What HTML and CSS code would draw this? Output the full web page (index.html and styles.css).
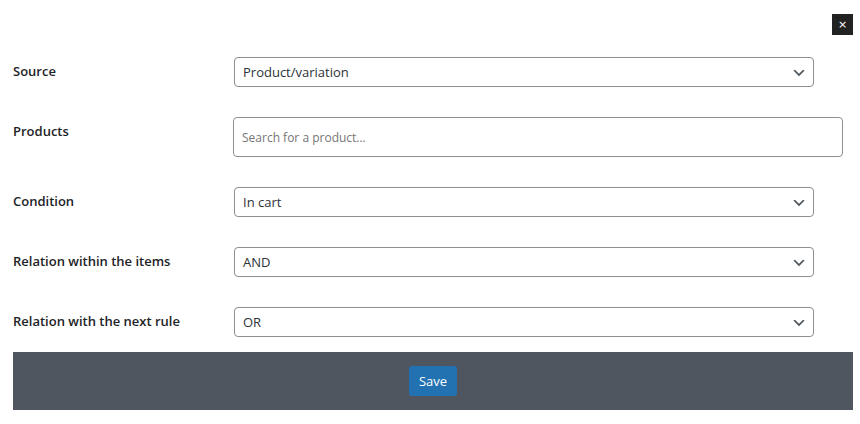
FILE: index.html
```html
<!DOCTYPE html>
<html>
<head>
<meta charset="utf-8">
<link rel="stylesheet" href="styles.css">
</head>
<body>
<div class="modal">
  <div class="topbar">
    <button class="close" type="button">×</button>
  </div>
  <div class="form">
    <div class="row">
      <div class="label">Source</div>
      <div class="field">
        <div class="select"><span>Product/variation</span>
          <svg width="16" height="16" viewBox="0 0 20 20"><path d="M5 6l5 5 5-5 2 1-7 7-7-7 2-1z" fill="#50575e"/></svg>
        </div>
      </div>
    </div>
    <div class="row">
      <div class="label">Products</div>
      <div class="field">
        <div class="search"><span class="placeholder">Search for a product…</span></div>
      </div>
    </div>
    <div class="row">
      <div class="label">Condition</div>
      <div class="field">
        <div class="select"><span>In cart</span>
          <svg width="16" height="16" viewBox="0 0 20 20"><path d="M5 6l5 5 5-5 2 1-7 7-7-7 2-1z" fill="#50575e"/></svg>
        </div>
      </div>
    </div>
    <div class="row">
      <div class="label">Relation within the items</div>
      <div class="field">
        <div class="select"><span>AND</span>
          <svg width="16" height="16" viewBox="0 0 20 20"><path d="M5 6l5 5 5-5 2 1-7 7-7-7 2-1z" fill="#50575e"/></svg>
        </div>
      </div>
    </div>
    <div class="row">
      <div class="label">Relation with the next rule</div>
      <div class="field">
        <div class="select"><span>OR</span>
          <svg width="16" height="16" viewBox="0 0 20 20"><path d="M5 6l5 5 5-5 2 1-7 7-7-7 2-1z" fill="#50575e"/></svg>
        </div>
      </div>
    </div>
  </div>
  <div class="footer">
    <button class="save" type="button">Save</button>
  </div>
</div>
</body>
</html>
```

FILE: styles.css
```css
* { box-sizing: border-box; }
body {
  margin: 0;
  background: #fff;
  font-family: "Open Sans", "Noto Sans", sans-serif;
  color: #1d2327;
}
.modal {
  padding: 14px 7px 0 13px;
}
.topbar {
  display: flex;
  justify-content: flex-end;
  height: 28px;
}
.close {
  width: 21px;
  height: 21px;
  padding: 0;
  border: none;
  background: #222;
  color: #fff;
  font-size: 11px;
  line-height: 21px;
  font-family: "DejaVu Sans", sans-serif;
  cursor: pointer;
}
.row {
  display: flex;
  align-items: flex-start;
}
.label {
  width: 210px;
  padding: 21px 10px 19px 0;
  font-size: 13px;
  font-weight: 600;
  line-height: 1.3;
}
.field {
  flex: 1;
  padding: 15px 10px;
}
.select {
  width: 580px;
  height: 30px;
  margin-left: 1px;
  border: 1px solid #8c8f94;
  border-radius: 4px;
  padding: 0 6px 0 8px;
  display: flex;
  align-items: center;
  justify-content: space-between;
  font-size: 13px;
  color: #2c3338;
}
.select svg { margin-top: 2px; }
.search {
  height: 40px;
  border: 1px solid #8c8f94;
  border-radius: 4px;
  padding: 0 8px;
  display: flex;
  align-items: center;
  font-size: 12px;
}
.placeholder { color: #757575; }
.footer {
  background: #50565f;
  height: 58px;
  display: flex;
  justify-content: center;
  align-items: center;
}
.save {
  background: #2271b1;
  color: #fff;
  border: none;
  border-radius: 3px;
  height: 30px;
  padding: 0 10px;
  font-family: "Open Sans", "Noto Sans", sans-serif;
  font-size: 13px;
}
```
